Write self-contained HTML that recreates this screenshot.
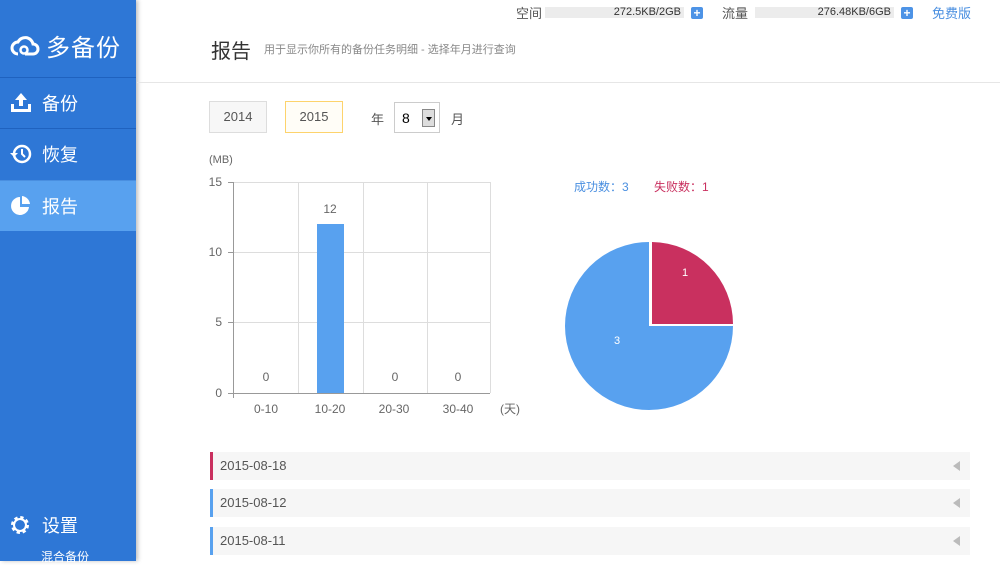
<!DOCTYPE html>
<html><head><meta charset="utf-8"><style>
*{margin:0;padding:0;box-sizing:border-box}
body{width:1000px;height:561px;overflow:hidden;background:#fff;font-family:"Liberation Sans","Noto Sans CJK SC",sans-serif;position:relative;color:#555}
.side{position:absolute;left:0;top:0;width:136px;height:561px;background:#2e77d6;box-shadow:2px 0 4px rgba(0,0,0,.25)}
.logo{position:absolute;left:10px;top:28px;color:#fff;font-size:24px;display:flex;align-items:center}
.item{position:absolute;left:0;width:136px;height:51px;color:#fff;font-size:18px;display:flex;align-items:center;border-top:1px solid #1f62bf}
.item span{margin-left:9px}
.item svg{margin-left:9px}
.top{position:absolute;top:3px;font-size:13px;color:#555}
.bar{position:absolute;top:7px;height:11px;background:#ececec;font-size:11px;color:#333;text-align:right;line-height:11px;padding-right:3px}
.plus{position:absolute;top:7px;width:12px;height:12px;background:#4d93e6;border-radius:2px;color:#fff;font-size:12px;line-height:12px;text-align:center;font-weight:bold}
.btn{position:absolute;top:101px;height:32px;width:58px;font-size:13px;line-height:30px;text-align:center}
.row{position:absolute;left:210px;width:760px;height:28px;background:#f6f6f6;font-size:13px;color:#555;line-height:28px;padding-left:10px}
.row:before{content:"";position:absolute;left:0;top:0;width:3px;height:28px;background:var(--c)}
.row:after{content:"";position:absolute;right:10px;top:9px;border:5px solid transparent;border-right:7px solid #bbb;border-left:0}
</style></head><body>
<div class="side">
 <div class="logo"><svg width="30" height="24" viewBox="0 0 30 24"><path d="M8 20a6 6 0 0 1 0-12a8 8 0 0 1 15 2a5 5 0 0 1 0 10h-8" fill="none" stroke="#fff" stroke-width="3"/><circle cx="14" cy="16" r="3.5" fill="none" stroke="#fff" stroke-width="2.5"/></svg><span style="margin-left:6px;letter-spacing:1px">多备份</span></div>
 <div class="item" style="top:77px"><svg width="24" height="22" viewBox="0 0 24 22"><path d="M12 1l6 7h-4v6h-4v-6h-4z" fill="#fff"/><path d="M2 12v8h20v-8h-3v5h-14v-5z" fill="#fff"/></svg><span>备份</span></div>
 <div class="item" style="top:128px"><svg width="24" height="22" viewBox="0 0 24 22"><circle cx="13" cy="11" r="8" fill="none" stroke="#fff" stroke-width="2.5"/><path d="M13 6v5l3 3" fill="none" stroke="#fff" stroke-width="2"/><path d="M1 10l4 4 4-4z" fill="#fff"/></svg><span>恢复</span></div>
 <div class="item" style="top:180px;background:#58a1ef;border-top:1px solid #4a8fe0"><svg width="24" height="22" viewBox="0 0 24 22"><path d="M11 2a9 9 0 1 0 9 10h-9z" fill="#fff"/><path d="M13 1a9 9 0 0 1 8 8h-8z" fill="#fff"/></svg><span>报告</span></div>
 <div style="position:absolute;left:9px;top:512px;color:#fff;font-size:18px;display:flex;align-items:center"><svg width="22" height="22" viewBox="0 0 22 22"><circle cx="11" cy="11" r="7" fill="none" stroke="#fff" stroke-width="4" stroke-dasharray="3 2.5"/><circle cx="11" cy="11" r="6" fill="none" stroke="#fff" stroke-width="2"/></svg><span style="margin-left:11px">设置</span></div>
 <div style="position:absolute;left:41px;top:548px;color:#fff;font-size:12px">混合备份</div>
</div>
<div class="top" style="left:516px">空间</div>
<div class="bar" style="left:545px;width:139px">272.5KB/2GB</div>
<div class="plus" style="left:691px">+</div>
<div class="top" style="left:722px">流量</div>
<div class="bar" style="left:755px;width:139px">276.48KB/6GB</div>
<div class="plus" style="left:901px">+</div>
<div class="top" style="left:932px;color:#4a8fe0">免费版</div>
<div style="position:absolute;left:211px;top:35px;font-size:20px;color:#333">报告</div>
<div style="position:absolute;left:264px;top:41px;font-size:11px;color:#888">用于显示你所有的备份任务明细 - 选择年月进行查询</div>
<div style="position:absolute;left:137px;top:82px;width:863px;height:1px;background:#e6e6e6"></div>
<div class="btn" style="left:209px;background:#f7f7f7;border:1px solid #ddd">2014</div>
<div class="btn" style="left:285px;background:#fffdf7;border:1px solid #fdd36c">2015</div>
<div style="position:absolute;left:371px;top:109px;font-size:13px">年</div>
<div style="position:absolute;left:394px;top:102px;width:46px;height:31px;border:1px solid #ccc;font-size:14px;color:#000;line-height:30px;padding-left:7px">8<div style="position:absolute;right:4px;top:6px;width:13px;height:18px;border:1px solid #888;background:#ddd"><div style="position:absolute;left:3px;top:7px;border:3px solid transparent;border-top:4px solid #000"></div></div></div>
<div style="position:absolute;left:451px;top:109px;font-size:13px">月</div>
<svg style="position:absolute;left:0;top:0" width="1000" height="561">
<g font-family="Liberation Sans, sans-serif" font-size="12" fill="#666">
<text x="209" y="163" font-size="11">(MB)</text>
<g stroke="#ddd" stroke-width="1">
<line x1="233" y1="182.5" x2="490" y2="182.5"/><line x1="233" y1="252.5" x2="490" y2="252.5"/><line x1="233" y1="322.5" x2="490" y2="322.5"/>
<line x1="298.5" y1="182" x2="298.5" y2="393"/><line x1="363.5" y1="182" x2="363.5" y2="393"/><line x1="427.5" y1="182" x2="427.5" y2="393"/><line x1="490.5" y1="182" x2="490.5" y2="393"/>
</g>
<g stroke="#999"><line x1="233.5" y1="182" x2="233.5" y2="398"/><line x1="233" y1="393.5" x2="490" y2="393.5"/>
<line x1="228" y1="182.5" x2="233" y2="182.5"/><line x1="228" y1="252.5" x2="233" y2="252.5"/><line x1="228" y1="322.5" x2="233" y2="322.5"/><line x1="228" y1="393.5" x2="233" y2="393.5"/></g>
<text x="222" y="186" text-anchor="end">15</text><text x="222" y="256" text-anchor="end">10</text><text x="222" y="326" text-anchor="end">5</text><text x="222" y="397" text-anchor="end">0</text>
<rect x="317" y="224" width="27" height="169" fill="#58a1ef"/>
<text x="330" y="213" text-anchor="middle">12</text>
<text x="266" y="381" text-anchor="middle">0</text><text x="395" y="381" text-anchor="middle">0</text><text x="458" y="381" text-anchor="middle">0</text>
<text x="266" y="413" text-anchor="middle">0-10</text><text x="330" y="413" text-anchor="middle">10-20</text><text x="394" y="413" text-anchor="middle">20-30</text><text x="458" y="413" text-anchor="middle">30-40</text>
<text x="500" y="413">(天)</text>
<text x="574" y="191" fill="#4a8fe0" font-size="12" font-family="Liberation Sans, Noto Sans CJK SC, sans-serif">成功数：3</text>
<text x="654" y="191" fill="#c9305f" font-size="12" font-family="Liberation Sans, Noto Sans CJK SC, sans-serif">失败数：1</text>
</g>
<path d="M649 326 L649 242 A84 84 0 1 0 733 326 Z" fill="#58a1ef"/>
<path d="M652 324 L652 242 A82 82 0 0 1 733 324 Z" fill="#c9305f"/>
<text x="685" y="276" font-family="Liberation Sans" font-size="11" fill="#fff" text-anchor="middle">1</text>
<text x="617" y="344" font-family="Liberation Sans" font-size="11" fill="#fff" text-anchor="middle">3</text>
</svg>
<div class="row" style="top:452px;--c:#c9305f">2015-08-18</div>
<div class="row" style="top:489px;--c:#58a1ef">2015-08-12</div>
<div class="row" style="top:527px;--c:#58a1ef">2015-08-11</div>
</body></html>
